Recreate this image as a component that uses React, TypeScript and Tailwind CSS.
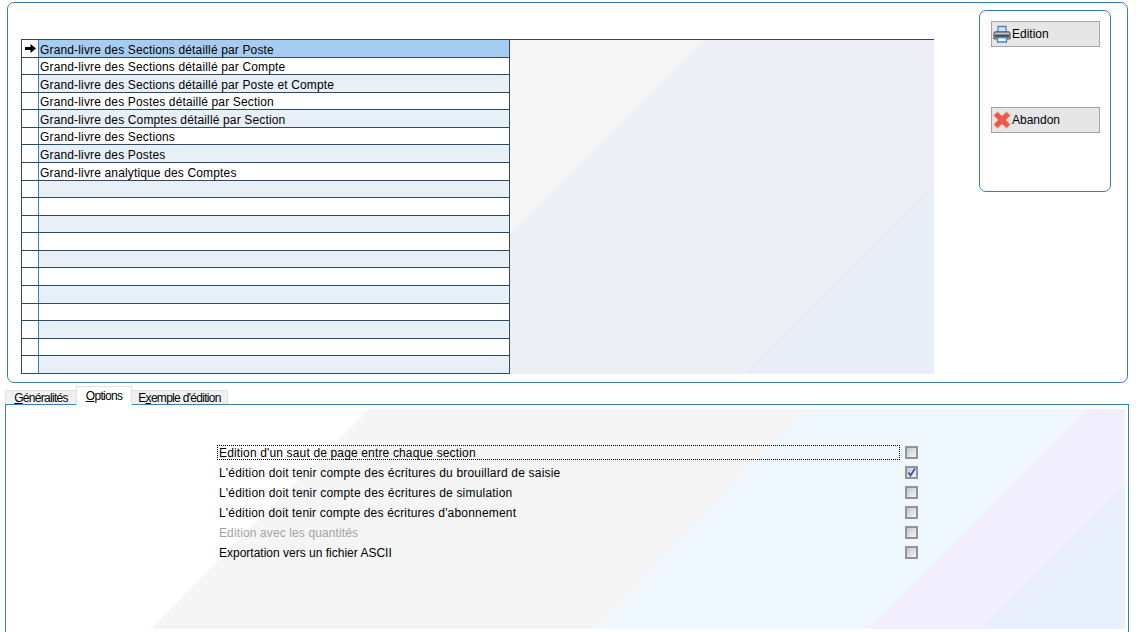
import React from 'react';

const ROWS = [
  'Grand-livre des Sections détaillé par Poste',
  'Grand-livre des Sections détaillé par Compte',
  'Grand-livre des Sections détaillé par Poste et Compte',
  'Grand-livre des Postes détaillé par Section',
  'Grand-livre des Comptes détaillé par Section',
  'Grand-livre des Sections',
  'Grand-livre des Postes',
  'Grand-livre analytique des Comptes',
  '', '', '', '', '', '', '', '', '', '', '',
];

// row heights alternate unevenly in the original grid
const ROW_HEIGHTS = [
  'h-[18px]', 'h-[17px]', 'h-[18px]', 'h-[17px]', 'h-[18px]', 'h-[17px]', 'h-[18px]', 'h-[18px]', 'h-[17px]', 'h-[18px]',
  'h-[17px]', 'h-[18px]', 'h-[17px]', 'h-[18px]', 'h-[18px]', 'h-[17px]', 'h-[18px]', 'h-[17px]', 'h-[18px]',
];

const OPTIONS = [
  { label: "Edition d'un saut de page entre chaque section", focused: true, spacing: 'tracking-[0.15px]' },
  { label: "L'édition doit tenir compte des écritures du brouillard de saisie", checked: true, spacing: 'tracking-[0.2px]' },
  { label: "L'édition doit tenir compte des écritures de simulation", spacing: 'tracking-[0.2px]' },
  { label: "L'édition doit tenir compte des écritures d'abonnement", spacing: 'tracking-[0.18px]' },
  { label: 'Edition avec les quantités', disabled: true, spacing: 'tracking-[0.12px]' },
  { label: 'Exportation vers un fichier ASCII', spacing: 'tracking-[0px]' },
];

const PrinterIcon = () => (
  <svg width="18" height="18" viewBox="0 0 18 18" className="shrink-0">
    <path d="M5 1.500h8v6H5z" fill="#cfe4f6" stroke="#3f86c6" strokeWidth="1.300" />
    <path d="M.8 8.500q0-2 2-2h12.400q2 0 2 2v5.500H.8z" fill="#84898f" stroke="#686d73" />
    <path d="M2 8.500h14" stroke="#c4c8cc" />
    <path d="M2 11h14" stroke="#45494e" strokeWidth="1.800" />
    <path d="M4.500 12.500h9v4.500h-9z" fill="#eef5fb" stroke="#3f86c6" strokeWidth="1.300" />
  </svg>
);

const CrossIcon = () => (
  <svg width="18" height="18" viewBox="0 0 18 18" className="shrink-0">
    <path
      d="M4.500.8 9 5l4.500-4.200 3.700 3.700L13 9l4.200 4.500-3.700 3.700L9 13l-4.500 4.200-3.700-3.700L5 9 .8 4.500z"
      fill="#e95a4b"
      stroke="#f3a89e"
      strokeLinejoin="round"
    />
  </svg>
);

const ArrowIcon = () => (
  <svg width="11" height="9" viewBox="0 0 11 9">
    <path d="M0 3h5.500V0L11 4.500 5.500 9V6H0z" fill="#000" />
  </svg>
);

const Checkbox: React.FC<{ checked?: boolean }> = ({ checked }) => (
  <div className="relative w-[13px] h-[13px] shrink-0 border-2 border-[#949494] bg-gradient-to-br from-[#bcc8d2] to-[#f6f6f6]">
    {checked && (
      <svg width="9" height="9" viewBox="0 0 9 9" className="absolute top-0 left-0">
        <path d="M1.500 4.500 3.500 7.500 8 .5" fill="none" stroke="#3b57a6" strokeWidth="1.800" />
      </svg>
    )}
  </div>
);

const Button: React.FC<{ icon: React.ReactNode; label: string }> = ({ icon, label }) => (
  <div className="flex items-center w-[109px] h-[26px] pl-[1px] border border-[#a8a4a4] bg-[#e6e6e6] text-[12px] text-black">
    {icon}
    <span className="ml-[1px]">{label}</span>
  </div>
);

const App: React.FC = () => {
  return (
    <div className="w-[1136px] h-[632px] overflow-hidden bg-white font-['Liberation_Sans',sans-serif] text-[12px] text-black">
      {/* top panel */}
      <div className="flex items-start ml-[7px] mt-[2px] w-[1121px] h-[381px] pl-[13px] pt-[7px] border border-[#3a7fc1] rounded-[7px]">
        <div className="flex w-[913px] mt-[29px] border-t border-[#2e4a62]">
          <div className="w-[489px] shrink-0 border-l border-r border-[#2e4a62]">
            {ROWS.map((row, i) => (
              <div key={i} className={`flex border-b border-[#2e4a62] ${ROW_HEIGHTS[i]}`}>
                <div className="flex items-center justify-center w-[16px] shrink-0 bg-white">
                  {i === 0 && <ArrowIcon />}
                </div>
                <div
                  className={`flex-1 flex items-center pl-[1px] pt-[2px] border-l border-[#3a7fc1] tracking-[0.15px] whitespace-nowrap ${
                    i === 0 ? 'bg-[#a6cdf0]' : i % 2 === 0 ? 'bg-[#e7eff7]' : 'bg-white'
                  }`}
                >
                  {row}
                </div>
              </div>
            ))}
          </div>
          <svg width="424" height="334" viewBox="0 0 424 334" className="shrink-0">
            <rect width="424" height="334" fill="#eeeef7" />
            <path d="M0 0H193L0 193z" fill="#f6f6f6" />
            <path d="M424 143V334H233z" fill="#e7eef6" />
          </svg>
        </div>

        <div className="w-[132px] h-[182px] ml-[45px] pl-[11px] pt-[10px] border border-[#3a7fc1] rounded-[7px]">
          <div className="flex flex-col gap-[60px]">
            <Button icon={<PrinterIcon />} label="Edition" />
            <Button icon={<CrossIcon />} label="Abandon" />
          </div>
        </div>
      </div>

      {/* tabs */}
      <div className="flex items-end ml-[5px] mt-[3px] h-[18px] tracking-[-0.7px]">
        <div className="flex items-center justify-center w-[71px] h-[14px] pt-[1px] bg-[#f0f0f0] border-t border-l border-[#e2e2e2]">
          <span><u>G</u>énéralités</span>
        </div>
        <div className="relative z-10 flex items-center justify-center w-[56px] h-[19px] -mb-px pb-[1px] bg-white border-t border-l border-r border-[#e2e2e2]">
          <span><u>O</u>ptions</span>
        </div>
        <div className="flex items-center justify-center w-[96px] h-[14px] pt-[1px] bg-[#f0f0f0] border-t border-r border-[#e2e2e2]">
          <span>E<u>x</u>emple d'édition</span>
        </div>
      </div>

      {/* options panel */}
      <div className="relative w-[1124px] h-[228px] ml-[5px] pt-[38px] border-t border-l border-r border-[#3a7fc1]">
        <svg width="1119" height="220" viewBox="0 0 1119 220" className="absolute left-0 top-[4px]">
          <path d="M363 0H803L587 220H144z" fill="#f5f5f5" />
          <path d="M803 0H1081L862 220H587z" fill="#eff7ff" />
          <path d="M1081 0H1119V74L973 220H862z" fill="#f1effd" />
          <path d="M1119 74V220H973z" fill="#e8effd" />
        </svg>
        <div className="relative ml-[211px]">
          {OPTIONS.map((opt, i) => (
            <div key={i} className="flex items-center gap-[5px] h-[20px] pb-[1px]">
              <div
                className={`flex items-center w-[683px] h-[15px] pl-[1px] border border-dotted whitespace-nowrap ${opt.spacing} ${
                  opt.focused ? 'border-black' : 'border-transparent'
                } ${opt.disabled ? 'text-[#a3a3a3]' : 'text-black'}`}
              >
                {opt.label}
              </div>
              <Checkbox checked={opt.checked} />
            </div>
          ))}
        </div>
      </div>
    </div>
  );
};

export default App;
